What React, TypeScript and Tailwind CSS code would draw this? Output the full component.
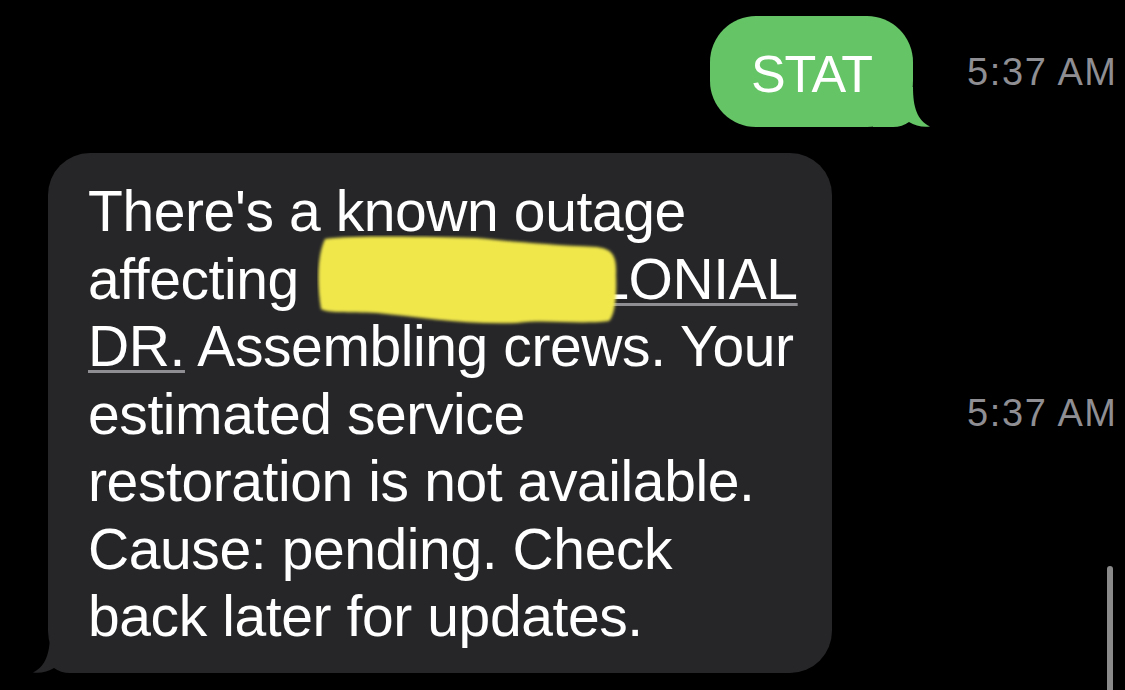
import React from "react";

const FONT = { fontFamily: '"Liberation Sans", Arial, sans-serif' };

function Tail({ color, flip = false }: { color: string; flip?: boolean }) {
  return (
    <svg
      viewBox="0 0 58 40"
      className={`absolute bottom-0 h-[40px] w-[58px] ${flip ? "left-[-16px] -scale-x-100" : "right-[-18px]"}`}
    >
      <path
        d="M0 0 H40 C40 20 44 33 57 39.5 C50 40.5 42 39 36 35 C32 38 26 40 20 40 H0 Z"
        fill={color}
      />
    </svg>
  );
}

function Timestamp() {
  return (
    <div className="w-[158px] shrink-0 text-[38px] leading-none tracking-[1.6px] text-[#8e8e93]">
      5:37 AM
    </div>
  );
}

function Redaction() {
  return (
    <span className="relative inline-block h-[10px] w-[283px]">
      <svg
        viewBox="0 0 302 92"
        className="absolute bottom-[-28px] left-[3px] h-[92px] w-[302px]"
      >
        <defs>
          <filter id="soft" x="-5%" y="-10%" width="110%" height="120%">
            <feGaussianBlur stdDeviation="1.6" />
          </filter>
        </defs>
        <path
          filter="url(#soft)"
          fill="#f0e74b"
          d="M8 4 C40 0 120 2 160 3 C190 6 230 10 280 12 C295 14 300 20 299 40 C300 60 298 80 292 86 C260 90 230 84 200 88 C150 90 100 82 60 78 C30 77 10 78 4 74 C0 50 0 20 8 4 Z"
        />
      </svg>
    </span>
  );
}

const link = "underline decoration-[#8e8e93] decoration-[3px] underline-offset-[4px]";

export default function App() {
  return (
    <div className="relative h-[690px] w-[1125px] overflow-hidden bg-black" style={FONT}>
      <div className="flex flex-col pt-[16px]">
        <div className="flex items-center">
          <div className="flex flex-1 justify-end pr-[54px]">
            <div className="relative flex h-[111px] w-[203px] items-center justify-center rounded-[46px] bg-[#65c466] pt-[4px]">
              <Tail color="#65c466" />
              <span className="relative text-[52px] leading-none tracking-[-1px] text-white">STAT</span>
            </div>
          </div>
          <Timestamp />
        </div>

        <div className="mt-[26px] flex items-center">
          <div className="flex-1 pl-[48px]">
            <div className="relative w-[784px] rounded-[42px] bg-[#262629] pb-[22px] pl-[40px] pt-[25px]">
              <Tail color="#262629" flip />
              <p className="relative text-[57px] leading-[67.5px] tracking-[-0.4px] text-white">
                There's a known outage
                <br />
                affecting <Redaction />
                <span className={link}>LONIAL</span>
                <br />
                <span className={link}>DR.</span> Assembling crews. Your
                <br />
                estimated service
                <br />
                restoration is not available.
                <br />
                Cause: pending. Check
                <br />
                back later for updates.
              </p>
            </div>
          </div>
          <Timestamp />
        </div>
      </div>

      <div className="absolute right-[12px] top-[566px] h-[140px] w-[6px] rounded-full bg-[#8a8a8a]" />
    </div>
  );
}
